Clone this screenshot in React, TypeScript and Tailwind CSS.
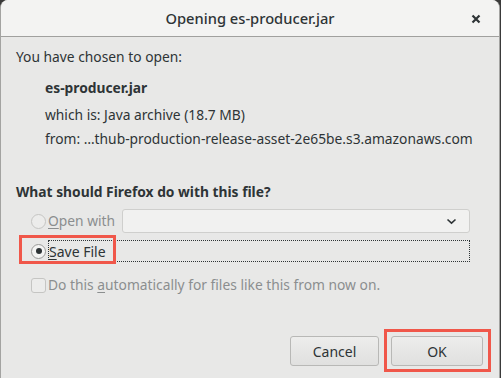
import React from 'react'

const font = { fontFamily: '"Noto Sans", "DejaVu Sans", sans-serif' }

function Radio({ checked, disabled }: { checked?: boolean; disabled?: boolean }) {
  return (
    <span
      className={`flex h-[15px] w-[15px] items-center justify-center rounded-full border ${
        disabled ? 'border-[#c5c5c3] bg-[#ececeb]' : 'border-[#9a9a98] bg-[#f4f4f3]'
      }`}
    >
      {checked && <span className="h-[6px] w-[6px] rounded-full bg-[#2e3436]" />}
    </span>
  )
}

export default function App() {
  return (
    <div className="h-[378px] w-[501px] bg-[#3a3a3a]" style={font}>
      <div className="flex h-full w-[500px] flex-col overflow-hidden rounded-t-[8px] border-x border-[#a3a3a1] bg-[#e8e8e7]">
        <div className="relative flex h-[37px] shrink-0 items-center justify-center border-b border-[#a0a09e] bg-[#f3f3f2] text-[14.7px] font-medium text-[#2e3436]">
          Opening es-producer.jar
          <svg className="absolute right-[18px] top-[14px]" width="10" height="10" viewBox="0 0 10 10">
            <path d="M1.5 1.5 L8.5 8.5 M8.5 1.5 L1.5 8.5" stroke="#2e3436" strokeWidth="2.2" />
          </svg>
        </div>

        <div className="flex flex-1 flex-col px-[15px] pt-[10px] text-[13.8px] text-[#2e3436]">
          <div className="leading-[20px]">You have chosen to open:</div>
          <div className="mt-[11px] pl-[29px] font-bold leading-[20px]">es-producer.jar</div>
          <div className="mt-[7px] pl-[29px] leading-[20px]">which is: Java archive (18.7 MB)</div>
          <div className="mt-[4px] pl-[29px] leading-[20px]">from: …thub-production-release-asset-2e65be.s3.amazonaws.com</div>

          <div className="mt-[33px] font-bold leading-[20px]">What should Firefox do with this file?</div>

          <div className="mt-[7px] flex items-center pl-[15px]">
            <Radio disabled />
            <span className="ml-[2px] w-[74px] text-[#8b8e8f]">
              <span className="underline underline-offset-2">O</span>pen with
            </span>
            <div className="mr-[14px] flex h-[24px] flex-1 items-center justify-end rounded-[3px] border border-[#cfcfcd] bg-[#f1f1f0] pr-[12px]">
              <svg width="11" height="7" viewBox="0 0 11 7">
                <path d="M1.5 1.5 L5.5 5.2 L9.5 1.5" stroke="#2e3436" strokeWidth="1.6" fill="none" />
              </svg>
            </div>
          </div>

          <div className="relative mt-[7px] flex items-center pl-[15px]">
            <Radio checked />
            <span className="mr-[14px] ml-[2px] flex h-[22px] flex-1 items-center border border-dotted border-[#2e3436] text-[14px]">
              <span className="underline underline-offset-2">S</span>ave File
            </span>
            <div className="absolute left-[3px] top-[-5px] h-[29px] w-[97px] border-[3px] border-[#f0574a]" />
          </div>

          <div className="mt-[13px] flex items-center pl-[15px] text-[#8b8e8f]">
            <span className="h-[15px] w-[15px] rounded-[3px] border border-[#c5c5c3] bg-[#ececeb]" />
            <span className="ml-[2px]">
              Do this <span className="underline underline-offset-2">a</span>utomatically for files like this from now on.
            </span>
          </div>

          <div className="mt-auto mb-[12px] flex justify-end gap-[12px] pr-[1px]">
            <button className="h-[30px] w-[89px] rounded-[3px] border border-[#b8b8b6] bg-gradient-to-b from-[#ededec] to-[#e0e0df] text-[14px] text-[#2e3436]">
              Cancel
            </button>
            <div className="relative">
              <button className="h-[30px] w-[92px] rounded-[3px] border border-[#b8b8b6] bg-gradient-to-b from-[#ededec] to-[#e0e0df] text-[14px] text-[#2e3436]">
                OK
              </button>
              <div className="absolute left-[-7px] top-[-7px] h-[43px] w-[107px] border-[3px] border-[#f0574a]" />
            </div>
          </div>
        </div>
      </div>
    </div>
  )
}
